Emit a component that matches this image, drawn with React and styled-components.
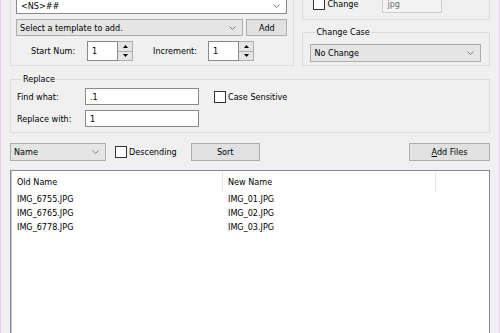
import styled, { createGlobalStyle } from "styled-components";

const GlobalStyle = createGlobalStyle`
  html, body {
    margin: 0;
    padding: 0;
    background: #f0f0f0;
    overflow: hidden;
  }
  body {
    font-family: "DejaVu Sans Condensed", "DejaVu Sans", sans-serif;
    font-stretch: condensed;
    font-size: 9px;
    color: #000;
  }
`;

const Window = styled.div`
  width: 500px;
  height: 333px;
  box-sizing: border-box;
  border-left: 1px solid #efc3ec;
  border-right: 1px solid #efc3ec;
  padding: 0 9px;
  overflow: hidden;
`;

const Content = styled.div`
  margin-top: -20px;
  display: flex;
  flex-direction: column;
`;

const TopRow = styled.div`
  display: flex;
  gap: 8px;
`;

const Box = styled.div`
  box-sizing: border-box;
  border: 1px solid #dcdcdc;
  width: ${(p) => p.$w || "auto"};
  padding: ${(p) => p.$pad || "0"};
  display: flex;
  flex-direction: column;
  gap: ${(p) => p.$gap || "0"};
`;

const Fieldset = styled.fieldset`
  box-sizing: border-box;
  margin: ${(p) => p.$m || "0"};
  border: 1px solid #dcdcdc;
  padding: ${(p) => p.$pad || "0"};
  min-inline-size: 0;
  display: flex;
  flex-direction: column;
  gap: ${(p) => p.$gap || "0"};
`;

const Legend = styled.legend`
  padding: 0 1px;
  margin-left: 5px;
  line-height: 12px;
  font-size: 9px;
`;

const RightCol = styled.div`
  display: flex;
  flex-direction: column;
  gap: 6px;
  width: 188px;
`;

const Row = styled.div`
  display: flex;
  align-items: center;
  gap: ${(p) => p.$gap || "0"};
  padding-left: ${(p) => p.$pl || "0"};
`;

const Label = styled.span`
  width: ${(p) => p.$w || "auto"};
  margin-left: ${(p) => p.$ml || "0"};
  flex: none;
  white-space: nowrap;
`;

const TextBox = styled.div`
  box-sizing: border-box;
  width: ${(p) => p.$w || "auto"};
  height: ${(p) => p.$h || "17px"};
  flex: none;
  background: ${(p) => (p.$disabled ? "#f4f4f4" : "#fff")};
  border: 1px solid ${(p) => (p.$disabled ? "#cccccc" : "#8a8a8a")};
  color: ${(p) => (p.$disabled ? "#6d6d6d" : "#000")};
  padding: 0 6px 0 4px;
  display: flex;
  align-items: center;
  justify-content: space-between;
`;

const Combo = styled.div`
  box-sizing: border-box;
  width: ${(p) => p.$w || "auto"};
  height: ${(p) => p.$h || "18px"};
  flex: ${(p) => (p.$grow ? 1 : "none")};
  background: #e5e5e5;
  border: 1px solid #adadad;
  padding: 0 6px 0 3px;
  display: flex;
  align-items: center;
  justify-content: space-between;
`;

const Button = styled.div`
  box-sizing: border-box;
  width: ${(p) => p.$w};
  height: ${(p) => p.$h || "18px"};
  margin-left: ${(p) => p.$ml || "0"};
  flex: none;
  background: #e1e1e1;
  border: 1px solid #adadad;
  display: flex;
  align-items: center;
  justify-content: center;
`;

const Check = styled.span`
  box-sizing: border-box;
  width: 12px;
  height: 12px;
  flex: none;
  background: #fff;
  border: 1px solid #333;
  margin: ${(p) => p.$m || "0"};
`;

const Spin = styled.div`
  display: flex;
  height: 20px;
  flex: none;
`;

const SpinText = styled.div`
  box-sizing: border-box;
  width: 31px;
  height: 20px;
  background: #fff;
  border: 1px solid #8a8a8a;
  padding-left: 4px;
  display: flex;
  align-items: center;
`;

const SpinButtons = styled.div`
  display: flex;
  flex-direction: column;
  width: 15px;
  height: 20px;
  border-top: 1px solid #adadad;
  border-bottom: 1px solid #adadad;
  box-sizing: border-box;
`;

const SpinBtn = styled.div`
  flex: 1;
  background: #e5e5e5;
  border-right: 1px solid #adadad;
  border-top: ${(p) => (p.$down ? "1px solid #adadad" : "none")};
  display: flex;
  align-items: center;
  justify-content: center;
`;

const SortRow = styled.div`
  display: flex;
  align-items: center;
  margin-top: 10px;
  height: 18px;
`;

const ListView = styled.div`
  margin-top: 9px;
  height: 170px;
  background: #fff;
  border: 1px solid #82879a;
  box-shadow: inset 1px 0 0 #c8c8cc;
`;

const Header = styled.div`
  display: grid;
  grid-template-columns: 212px 213px 1fr;
  height: 21px;
`;

const HeadCell = styled.div`
  display: flex;
  align-items: center;
  padding-left: ${(p) => p.$pl || "6px"};
  border-right: ${(p) => (p.$last ? "none" : "1px solid #e5e5e5")};
  margin: 1px 0 0;
`;

const ItemRow = styled.div`
  display: grid;
  grid-template-columns: 212px 213px 1fr;
  height: 14px;
  align-items: center;
`;

const Cell = styled.div`
  padding-left: ${(p) => p.$pl || "6px"};
`;

const Chevron = () => (
  <svg width="7" height="4" viewBox="0 0 7 4">
    <path d="M0.5 0.5 L3.5 3.5 L6.5 0.5" fill="none" stroke="#7a7a7a" strokeWidth="1" />
  </svg>
);

const Tri = ({ down }) => (
  <svg width="5" height="3" viewBox="0 0 5 3">
    <path d={down ? "M0 0 L5 0 L2.5 3 Z" : "M0 3 L5 3 L2.5 0 Z"} fill="#000" />
  </svg>
);

const Spinner = ({ value }) => (
  <Spin>
    <SpinText>{value}</SpinText>
    <SpinButtons>
      <SpinBtn>
        <Tri />
      </SpinBtn>
      <SpinBtn $down>
        <Tri down />
      </SpinBtn>
    </SpinButtons>
  </Spin>
);

const files = [
  ["IMG_6755.JPG", "IMG_01.JPG"],
  ["IMG_6765.JPG", "IMG_02.JPG"],
  ["IMG_6778.JPG", "IMG_03.JPG"],
];

export default function App() {
  return (
    <>
      <GlobalStyle />
      <Window>
        <Content>
          <TopRow>
            <Box $w="285px" $pad="16px 6px 4px 5px" $gap="5px">
              <TextBox $h="17px">
                <span>&lt;NS&gt;##</span>
                <Chevron />
              </TextBox>
              <Row $gap="3px">
                <Combo $grow $h="17px">
                  <span>Select a template to add.</span>
                  <Chevron />
                </Combo>
                <Button $w="41px" $h="17px">
                  Add
                </Button>
              </Row>
              <Row $pl="15px">
                <Label $w="56px">Start Num:</Label>
                <Spinner value="1" />
                <Label $w="55px" $ml="20px">
                  Increment:
                </Label>
                <Spinner value="1" />
              </Row>
            </Box>
            <RightCol>
              <Box $pad="14px 6px 6px 10px">
                <Row>
                  <Check />
                  <Label $w="55px" $ml="2px">
                    Change
                  </Label>
                  <TextBox $w="60px" $h="18px" $disabled>
                    jpg
                  </TextBox>
                </Row>
              </Box>
              <Fieldset $pad="6px 8px 3px 7px">
                <Legend>Change Case</Legend>
                <Combo $h="18px">
                  <span>No Change</span>
                  <Chevron />
                </Combo>
              </Fieldset>
            </RightCol>
          </TopRow>
          <Fieldset $m="7px 0 0" $pad="3px 6px 5px 6px" $gap="5px">
            <Legend>Replace</Legend>
            <Row>
              <Label $w="68px">Find what:</Label>
              <TextBox $w="114px">.1</TextBox>
              <Check $m="0 2px 0 15px" />
              <Label>Case Sensitive</Label>
            </Row>
            <Row>
              <Label $w="68px">Replace with:</Label>
              <TextBox $w="114px">1</TextBox>
            </Row>
          </Fieldset>
          <SortRow>
            <Combo $w="96px">
              <span>Name</span>
              <Chevron />
            </Combo>
            <Check $m="0 2px 0 9px" />
            <Label>Descending</Label>
            <Button $w="69px" $ml="14px">
              Sort
            </Button>
            <Button $w="81px" $ml="auto">
              <span>
                <u>A</u>dd Files
              </span>
            </Button>
          </SortRow>
          <ListView>
            <Header>
              <HeadCell>Old Name</HeadCell>
              <HeadCell $pl="5px">New Name</HeadCell>
              <HeadCell $last />
            </Header>
            {files.map(([oldName, newName]) => (
              <ItemRow key={oldName}>
                <Cell>{oldName}</Cell>
                <Cell $pl="5px">{newName}</Cell>
              </ItemRow>
            ))}
          </ListView>
        </Content>
      </Window>
    </>
  );
}
